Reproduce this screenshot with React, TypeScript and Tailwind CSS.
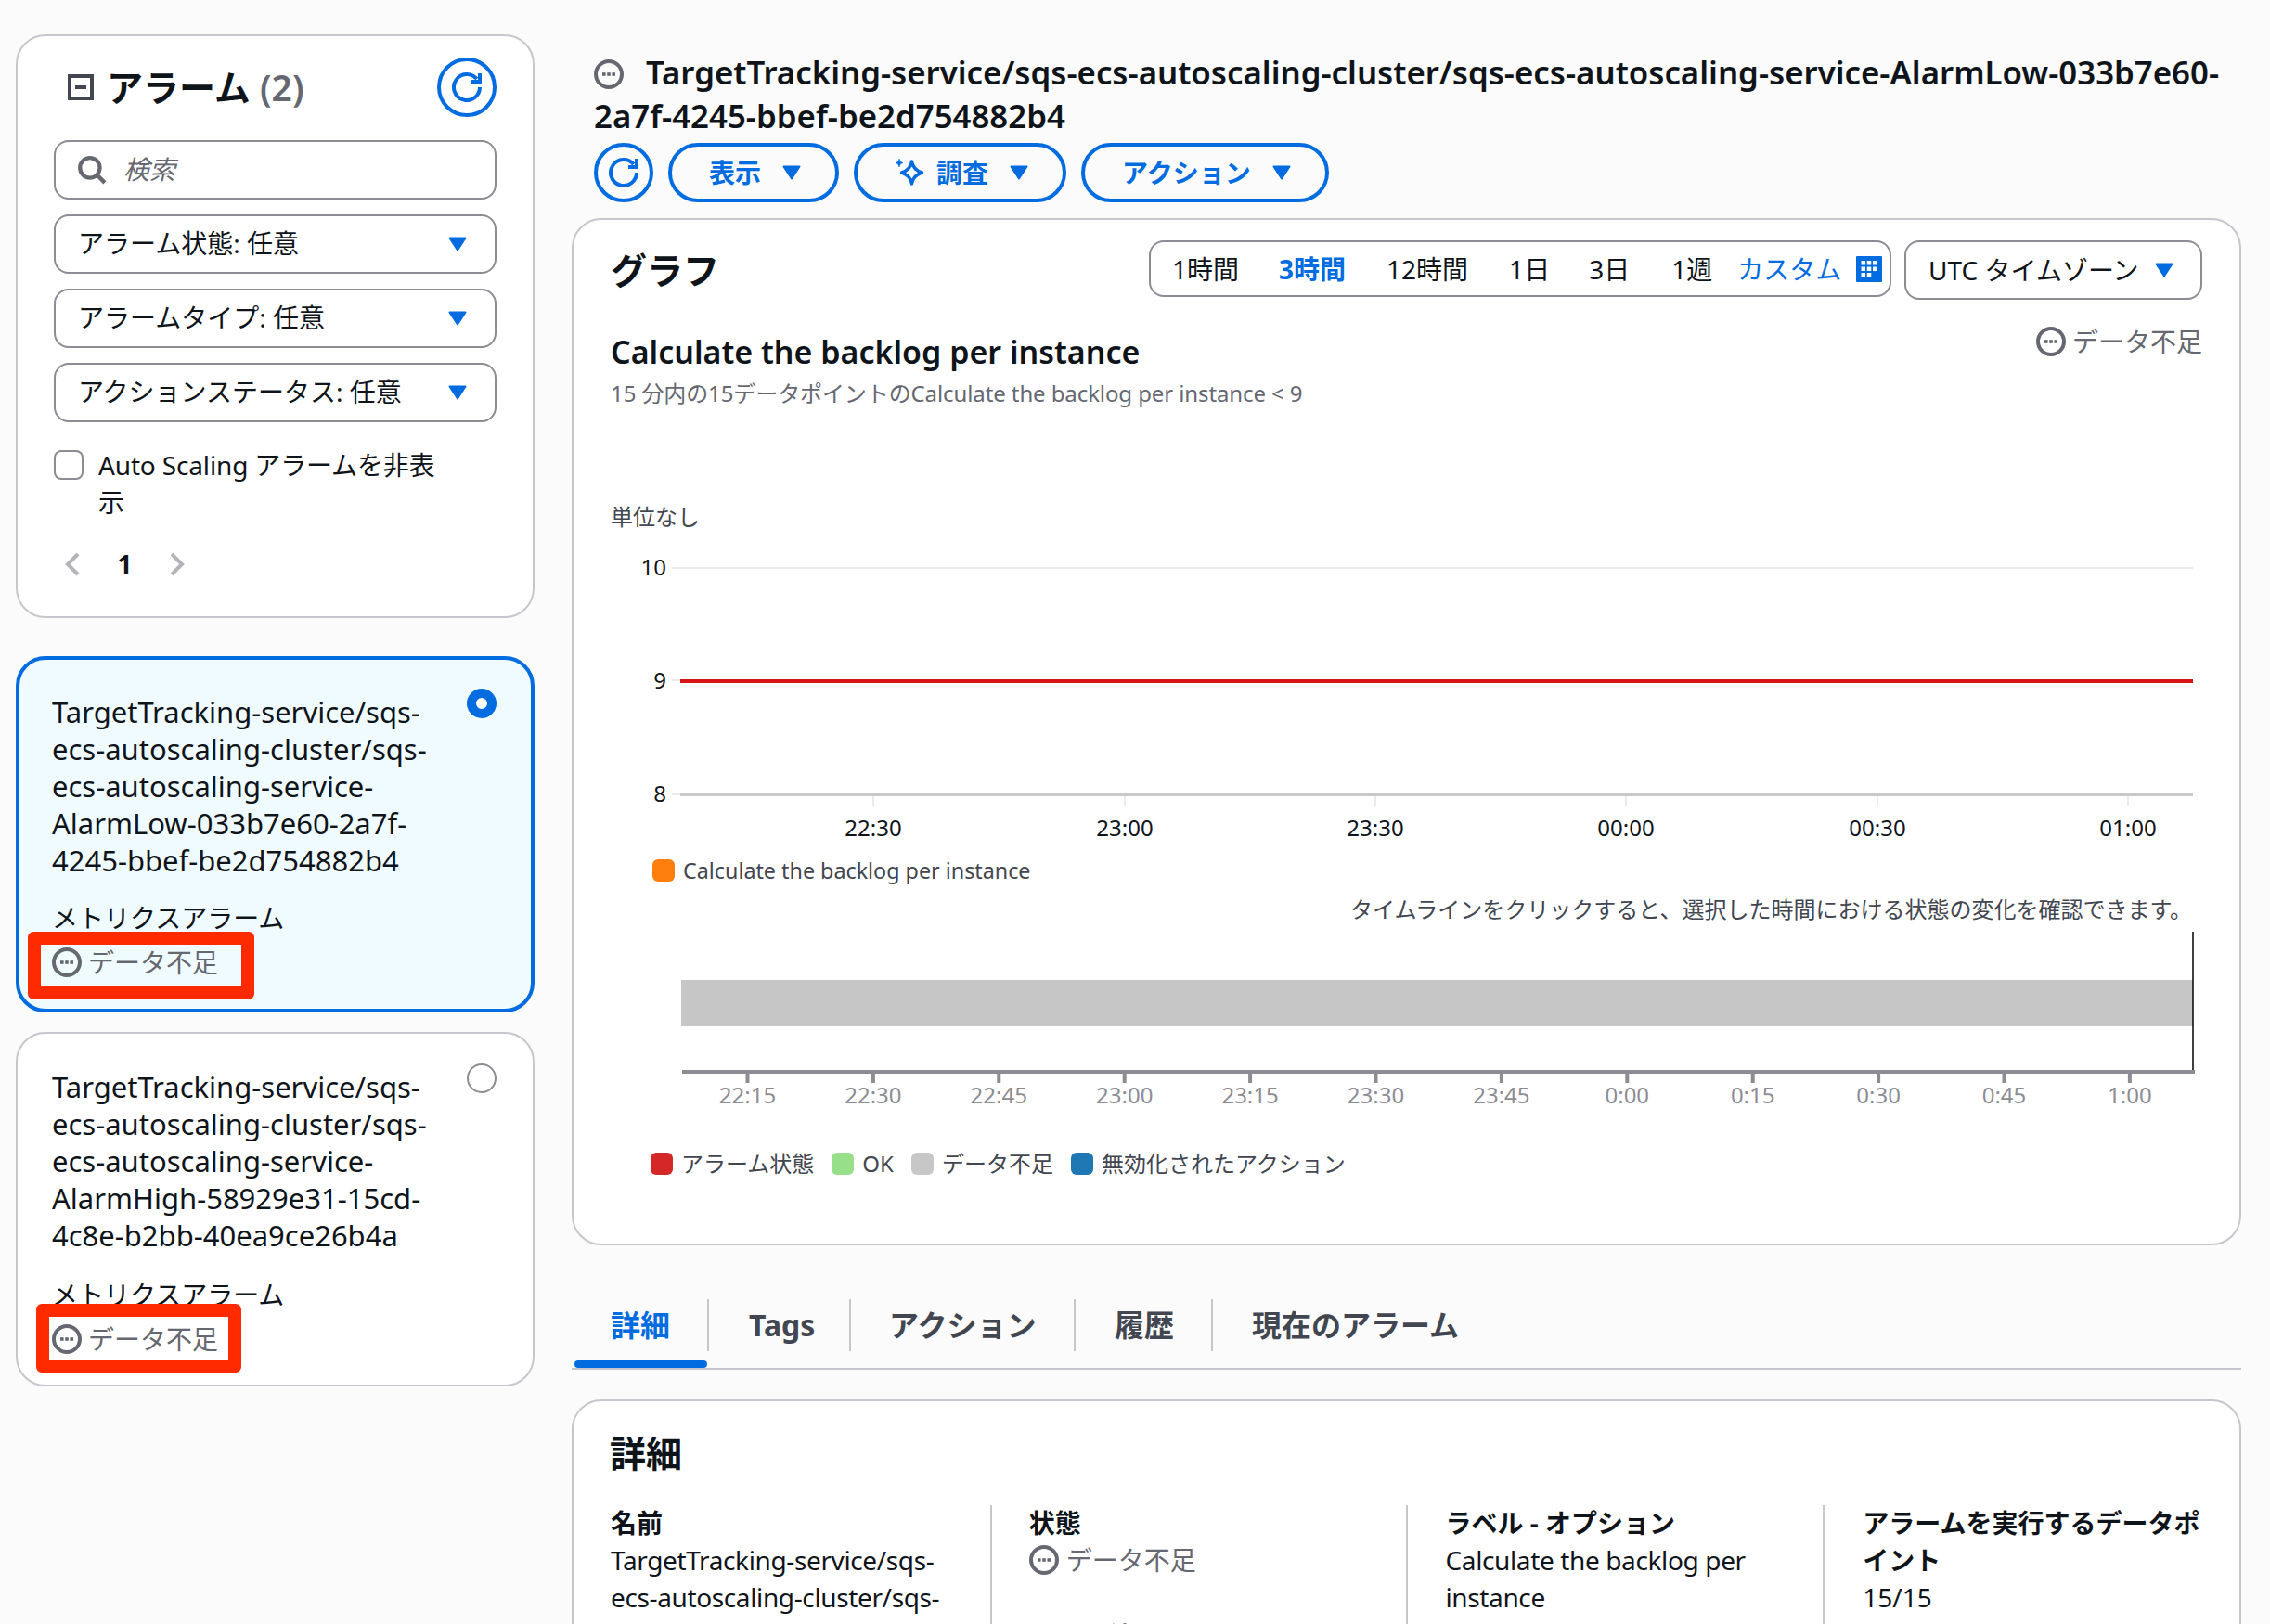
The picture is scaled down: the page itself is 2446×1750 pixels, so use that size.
import React from "react";

const Status = ({ cls = "w-[32px] h-[32px]" }: { cls?: string }) => (
  <svg viewBox="0 0 16 16" className={cls + " shrink-0"} fill="none">
    <circle cx="8" cy="8" r="7" stroke="#656871" strokeWidth="2" />
    <rect x="4.5" y="7.1" width="1.8" height="1.8" fill="#656871" />
    <rect x="7.1" y="7.1" width="1.8" height="1.8" fill="#656871" />
    <rect x="9.7" y="7.1" width="1.8" height="1.8" fill="#656871" />
  </svg>
);

const Refresh = () => (
  <svg viewBox="0 0 16 16" className="w-[32px] h-[32px]" fill="none" stroke="#006ce0" strokeWidth="2">
    <path d="M15 8a7 7 0 1 1-1.6-4.45" />
    <path d="M15 0.5V5h-4.5" strokeLinejoin="miter" />
  </svg>
);

const Caret = () => (
  <svg viewBox="0 0 20 16" className="w-[20px] h-[16px] shrink-0" fill="#006ce0" stroke="#006ce0" strokeWidth="2" strokeLinejoin="round">
    <path d="M1.5 1.5h17l-8.5 13z" />
  </svg>
);

const Select = ({ label }: { label: string }) => (
  <div className="h-[64px] flex items-center justify-between rounded-[16px] border-2 border-[#8c8c94] bg-white pl-[24px] pr-[30px] text-[28px] leading-[40px]">
    <span className="-mt-[2px]">{label}</span>
    <Caret />
  </div>
);

const StatusRow = () => (
  <div className="mt-[8px] flex items-center gap-[7px] h-[40px] text-[#656871] text-[28px]">
    <Status />
    <span>データ不足</span>
  </div>
);

const Tab = ({ label, cls }: { label: string; cls: string }) => (
  <div className={cls + " h-[56px] flex items-center shrink-0 text-[32px] font-bold"}>{label}</div>
);

const Swatch = ({ cls }: { cls: string }) => <span className={cls + " w-[24px] h-[24px] rounded-[6px] shrink-0"} />;

const ticks = ["22:15", "22:30", "22:45", "23:00", "23:15", "23:30", "23:45", "0:00", "0:15", "0:30", "0:45", "1:00"];
const hours = [
  ["22:30", 283],
  ["23:00", 554],
  ["23:30", 824],
  ["00:00", 1094],
  ["00:30", 1365],
  ["01:00", 1635],
] as [string, number][];

export default function App() {
  return (
    <div className="w-[2446px] h-[1750px] overflow-hidden bg-[#fbfbfb] flex pl-[17px] pt-[37px] text-[#0f141a] text-[28px] leading-[40px] font-['Noto_Sans','Noto_Sans_CJK_JP',sans-serif]">
      {/* Left column */}
      <div className="w-[559px] shrink-0 mr-[40px]">
        <div className="h-[629px] rounded-[32px] border-2 border-[#c6c6cd] bg-white px-[39px] pt-[23px]">
          <div className="h-[64px] flex items-center justify-between pl-[15px]">
            <div className="flex items-center gap-[14px]">
              <svg viewBox="0 0 28 28" className="w-[28px] h-[28px]" fill="none" stroke="#424650" strokeWidth="4">
                <rect x="2" y="2" width="24" height="24" />
                <path d="M8 14h12" />
              </svg>
              <h2 className="text-[39px] leading-[48px] font-bold">
                アラーム <span className="font-semibold text-[#656871]">(2)</span>
              </h2>
            </div>
            <div className="w-[64px] h-[64px] rounded-full border-4 border-[#006ce0] flex items-center justify-center">
              <Refresh />
            </div>
          </div>
          <div className="mt-[25px] h-[64px] flex items-center rounded-[16px] border-2 border-[#8c8c94] bg-white pl-[23px] gap-[18px]">
            <svg viewBox="0 0 30 30" className="w-[32px] h-[32px]" fill="none" stroke="#656871" strokeWidth="4">
              <circle cx="13" cy="13" r="10" />
              <path d="M20 20l8 8" />
            </svg>
            <span className="italic text-[#656871] -mt-[2px]">検索</span>
          </div>
          <div className="mt-[16px] flex flex-col gap-[16px]">
            <Select label="アラーム状態: 任意" />
            <Select label="アラームタイプ: 任意" />
            <Select label="アクションステータス: 任意" />
          </div>
          <div className="mt-[26px] flex items-start gap-[16px]">
            <span className="mt-[4px] w-[32px] h-[32px] rounded-[8px] border-2 border-[#8c8c94] bg-white shrink-0" />
            <span className="w-[370px] tracking-[-0.15px]">Auto Scaling アラームを非表示</span>
          </div>
          <div className="mt-[27px] h-[40px] flex items-center pl-[12px]">
            <svg viewBox="0 0 16 26" className="w-[16px] h-[26px]" fill="none" stroke="#b4b4bb" strokeWidth="4">
              <path d="M14 2L3 13l11 11" />
            </svg>
            <span className="w-[97px] text-center font-bold">1</span>
            <svg viewBox="0 0 16 26" className="w-[16px] h-[26px]" fill="none" stroke="#b4b4bb" strokeWidth="4">
              <path d="M2 2l11 11L2 24" />
            </svg>
          </div>
        </div>

        <div className="relative mt-[41px] h-[384px] rounded-[32px] border-4 border-[#006ce0] bg-[#f0fbff] pl-[35px] pr-[37px] pt-[30px]">
          <div className="flex justify-between">
            <div className="mt-[6px] text-[31px] whitespace-nowrap">
              TargetTracking-service/sqs-
              <br />
              ecs-autoscaling-cluster/sqs-
              <br />
              ecs-autoscaling-service-
              <br />
              AlarmLow-033b7e60-2a7f-
              <br />
              4245-bbef-be2d754882b4
            </div>
            <span className="mt-[1px] w-[32px] h-[32px] rounded-full border-[10px] border-[#006ce0] bg-white shrink-0" />
          </div>
          <div className="mt-[22px]">メトリクスアラーム</div>
          <StatusRow />
          <div className="absolute left-[9px] top-[293px] w-[244px] h-[73px] border-[14px] border-[#ff2a00] rounded-[6px]" />
        </div>

        <div className="relative mt-[21px] h-[382px] rounded-[32px] border-2 border-[#c6c6cd] bg-white pl-[37px] pr-[39px] pt-[32px]">
          <div className="flex justify-between">
            <div className="mt-[5px] text-[31px] whitespace-nowrap">
              TargetTracking-service/sqs-
              <br />
              ecs-autoscaling-cluster/sqs-
              <br />
              ecs-autoscaling-service-
              <br />
              AlarmHigh-58929e31-15cd-
              <br />
              4c8e-b2bb-40ea9ce26b4a
            </div>
            <span className="w-[32px] h-[32px] rounded-full border-2 border-[#8c8c94] bg-white shrink-0" />
          </div>
          <div className="mt-[24px]">メトリクスアラーム</div>
          <StatusRow />
          <div className="absolute left-[20px] top-[291px] w-[221px] h-[74px] border-[14px] border-[#ff2a00] rounded-[6px]" />
        </div>
      </div>

      {/* Right column */}
      <div className="w-[1799px] shrink-0">
        <div className="mt-[17px] pl-[24px] text-[34.8px] leading-[47px] font-semibold">
          <Status cls="inline-block w-[32px] h-[32px] mr-[24px] align-[-5px]" />
          TargetTracking-service/sqs-ecs-autoscaling-cluster/sqs-ecs-autoscaling-service-AlarmLow-033b7e60-2a7f-4245-bbef-be2d754882b4
        </div>
        <div className="mt-[6px] pl-[24px] flex gap-[16px] text-[#006ce0] font-bold">
          <div className="w-[64px] h-[64px] rounded-full border-4 border-[#006ce0] flex items-center justify-center">
            <Refresh />
          </div>
          <div className="h-[64px] rounded-full border-4 border-[#006ce0] flex items-center gap-[23px] pl-[40px] pr-[37px]">
            <span>表示</span>
            <Caret />
          </div>
          <div className="h-[64px] rounded-full border-4 border-[#006ce0] flex items-center pl-[40px] pr-[37px]">
            <svg viewBox="0 0 32 32" className="w-[32px] h-[32px] mr-[13px]" fill="none" stroke="#006ce0" strokeWidth="3.5" strokeLinejoin="round">
              <path d="M18.5 4c1 6 4.5 10 11 12-6.5 2-10 6-11 12-1-6-4.5-10-11-12 6.5-2 10-6 11-12z" />
              <path d="M5 1l1.3 3.2L9 5.5 6.3 6.8 5 10 3.7 6.8 1 5.5l2.7-1.3z" fill="#006ce0" strokeWidth="0.5" />
            </svg>
            <span className="mr-[23px]">調査</span>
            <Caret />
          </div>
          <div className="h-[64px] rounded-full border-4 border-[#006ce0] flex items-center gap-[23px] pl-[40px] pr-[37px]">
            <span>アクション</span>
            <Caret />
          </div>
        </div>

        {/* Graph card */}
        <div className="mt-[17px] h-[1107px] rounded-[32px] border-2 border-[#c6c6cd] bg-white pl-[40px] pr-[40px] pt-[22px]">
          <div className="flex items-start">
            <h2 className="h-[64px] flex items-center text-[39px] font-bold mr-auto">グラフ</h2>
            <div className="w-[800px] h-[61px] rounded-[16px] border-2 border-[#8c8c94] flex items-center pl-[23px] whitespace-nowrap">
              <span className="mr-[43px]">1時間</span>
              <span className="mr-[44px] font-bold text-[#006ce0]">3時間</span>
              <span className="mr-[44px]">12時間</span>
              <span className="mr-[42px]">1日</span>
              <span className="mr-[45px]">3日</span>
              <span className="mr-[27px]">1週</span>
              <span className="mr-[16px] text-[#006ce0]">カスタム</span>
              <svg viewBox="0 0 28 28" className="w-[28px] h-[28px] shrink-0">
                <rect width="28" height="28" rx="1" fill="#006ce0" />
                <g fill="#fff">
                  <rect x="5.5" y="5" width="4.5" height="4.5" />
                  <rect x="11.75" y="5" width="4.5" height="4.5" />
                  <rect x="18" y="5" width="4.5" height="4.5" />
                  <rect x="5.5" y="11.5" width="4.5" height="4.5" />
                  <rect x="11.75" y="11.5" width="4.5" height="4.5" />
                  <rect x="18" y="11.5" width="4.5" height="4.5" />
                  <rect x="5.5" y="18" width="4.5" height="4.5" />
                  <rect x="11.75" y="18" width="4.5" height="4.5" />
                </g>
              </svg>
            </div>
            <div className="ml-[14px] w-[321px] h-[64px] rounded-[16px] border-2 border-[#8c8c94] flex items-center justify-between pl-[24px] pr-[29px] whitespace-nowrap">
              <span>UTC タイムゾーン</span>
              <Caret />
            </div>
          </div>

          <div className="mt-[32px] flex justify-between items-start">
            <div className="text-[34px] leading-[48px] font-semibold">Calculate the backlog per instance</div>
            <div className="-mt-[7px] flex items-center gap-[7px] text-[#656871]">
              <Status />
              <span>データ不足</span>
            </div>
          </div>
          <div className="mt-[3px] text-[24px] leading-[36px] text-[#656871] tracking-[-0.1px]">15 分内の15データポイントのCalculate the backlog per instance &lt; 9</div>

          <div className="mt-[97px] text-[24px] leading-[36px] text-[#424650]">単位なし</div>
          <svg width="1716" height="320" className="mt-[15px] block text-[24px]">
            <path d="M66 22H1705" stroke="#e9ebed" strokeWidth="2" />
            <path d="M66 143H75" stroke="#e9ebed" strokeWidth="2" />
            <path d="M66 266H75" stroke="#e9ebed" strokeWidth="2" />
            <path d="M75 144H1705" stroke="#d91515" strokeWidth="4" />
            <path d="M75 266H1705" stroke="#c9c9c9" strokeWidth="4" />
            {[["10", 20], ["9", 142], ["8", 264]].map(([t, y]) => (
              <text key={t} x="60" y={y} textAnchor="end" dominantBaseline="central" fill="#0f141a">
                {t}
              </text>
            ))}
            {hours.map(([t, x]) => (
              <g key={t}>
                <path d={`M${x} 268V278`} stroke="#e9ebed" strokeWidth="2" />
                <text x={x} y="301" textAnchor="middle" dominantBaseline="central" fill="#0f141a">
                  {t}
                </text>
              </g>
            ))}
          </svg>
          <div className="mt-[10px] pl-[45px] flex items-center gap-[9px] text-[23.3px] leading-[36px] text-[#424650]">
            <Swatch cls="bg-[#ff7f0e]" />
            <span>Calculate the backlog per instance</span>
          </div>
          <div className="mt-[6px] pr-[11px] text-right text-[24px] leading-[36px] text-[#424650]">
            タイムラインをクリックすると、選択した時間における状態の変化を確認できます。
          </div>
          <svg width="1716" height="200" className="mt-[2px] block text-[24px]">
            <rect x="76" y="56" width="1629" height="50" fill="#c6c6c6" />
            <path d="M1705 4V155" stroke="#000" strokeWidth="1.5" />
            <path d="M77 155H1707" stroke="#8c8c94" strokeWidth="4" />
            {ticks.map((t, i) => {
              const x = 147.5 + 135.4 * i;
              return (
                <g key={t}>
                  <path d={`M${x} 157V167`} stroke="#8c8c94" strokeWidth="4" />
                  <text x={x} y="179" textAnchor="middle" dominantBaseline="central" fill="#8c8c94">
                    {t}
                  </text>
                </g>
              );
            })}
          </svg>
          <div className="mt-[36px] pl-[43px] flex items-center gap-[19px] text-[24px] leading-[36px] text-[#424650]">
            <div className="flex items-center gap-[9px]">
              <Swatch cls="bg-[#d62728]" />
              <span>アラーム状態</span>
            </div>
            <div className="flex items-center gap-[9px]">
              <Swatch cls="bg-[#98df8a]" />
              <span>OK</span>
            </div>
            <div className="flex items-center gap-[9px]">
              <Swatch cls="bg-[#c7c7c7]" />
              <span>データ不足</span>
            </div>
            <div className="flex items-center gap-[9px]">
              <Swatch cls="bg-[#1f77b4]" />
              <span>無効化されたアクション</span>
            </div>
          </div>
        </div>

        {/* Tabs */}
        <div className="mt-[58px] border-b-2 border-[#c6c6cd] h-[76px]">
          <div className="flex">
            <Tab label="詳細" cls="w-[148px] pl-[42px] border-r-2 border-[#c6c6cd] text-[#006ce0]" />
            <Tab label="Tags" cls="w-[153px] pl-[43px] border-r-2 border-[#c6c6cd] text-[#424650]" />
            <Tab label="アクション" cls="w-[242px] pl-[41px] border-r-2 border-[#c6c6cd] text-[#424650]" />
            <Tab label="履歴" cls="w-[148px] pl-[42px] border-r-2 border-[#c6c6cd] text-[#424650]" />
            <Tab label="現在のアラーム" cls="pl-[42px] text-[#424650]" />
          </div>
          <div className="mt-[10px] ml-[3px] w-[143px] h-[8px] rounded-[4px] bg-[#006ce0]" />
        </div>

        {/* Details */}
        <div className="mt-[32px] h-[400px] rounded-[32px] border-2 border-[#c6c6cd] bg-white pl-[39px] pt-[28px]">
          <h2 className="text-[39px] leading-[56px] font-bold">詳細</h2>
          <div className="mt-[28px] flex">
            <div className="w-[410px] pr-[20px] pl-[1px] -mt-[1px]">
              <div className="font-bold">名前</div>
              <div className="tracking-[-0.37px]">
                TargetTracking-service/sqs-
                <br />
                ecs-autoscaling-cluster/sqs-
              </div>
            </div>
            <div className="w-[449px] border-l-2 border-[#c6c6cd] pl-[40px] pr-[30px]">
              <div className="-mt-[1px] font-bold">状態</div>
              <div className="flex items-center gap-[8px] text-[#656871]">
                <Status />
                <span>データ不足</span>
              </div>
              <div className="mt-[42px] font-bold">しきい値</div>
            </div>
            <div className="w-[449px] border-l-2 border-[#c6c6cd] pl-[40px] pr-[40px]">
              <div className="-mt-[1px] font-bold">ラベル - オプション</div>
              <div className="tracking-[-0.37px]">Calculate the backlog per instance</div>
            </div>
            <div className="w-[449px] border-l-2 border-[#c6c6cd] pl-[41px] pr-[40px]">
              <div className="-mt-[1px] font-bold">アラームを実行するデータポイント</div>
              <div>15/15</div>
            </div>
          </div>
        </div>
      </div>
    </div>
  );
}
